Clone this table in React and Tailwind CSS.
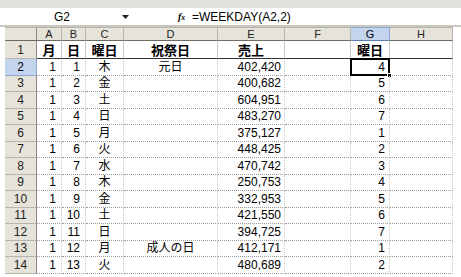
import React from 'react';

const cols = ['A', 'B', 'C', 'D', 'E', 'F', 'G', 'H'];

const rows = [
  ['1', '1', '木', '元日', '402,420', '4'],
  ['1', '2', '金', '', '400,682', '5'],
  ['1', '3', '土', '', '604,951', '6'],
  ['1', '4', '日', '', '483,270', '7'],
  ['1', '5', '月', '', '375,127', '1'],
  ['1', '6', '火', '', '448,425', '2'],
  ['1', '7', '水', '', '470,742', '3'],
  ['1', '8', '木', '', '250,753', '4'],
  ['1', '9', '金', '', '332,953', '5'],
  ['1', '10', '土', '', '421,550', '6'],
  ['1', '11', '日', '', '394,725', '7'],
  ['1', '12', '月', '成人の日', '412,171', '1'],
  ['1', '13', '火', '', '480,689', '2'],
];

const gridCols = 'grid grid-cols-[32px_25px_24px_38px_94px_67px_66px_39px_63px]';
const font = { fontFamily: '"Liberation Sans", "Noto Sans CJK JP", sans-serif' };

// data cell: vertical grid solid, horizontal dotted
const cell = 'border-r border-r-[#c8c8c8] border-b border-dotted border-b-[#9a9a9a] flex items-center text-[12px] text-black leading-none';

const RowHeader = ({ n, active }) => (
  <div
    className={`flex items-center justify-center text-[12px] border-r border-b leading-none ${
      active
        ? 'bg-[#c3d4ee] border-r-[#8fa7cc] border-b-[#8fa7cc] text-black'
        : 'bg-[#e6e4da] border-r-[#8c8a80] border-b-[#b8b6ac] text-[#222]'
    }`}
  >
    {n}
  </div>
);

export default function App() {
  return (
    <div className="w-[461px] h-[277px] bg-white overflow-hidden" style={font}>
      {/* name box / formula bar */}
      <div className="h-[8px] bg-[#e4e2dc]" />
      <div className="h-[17px] flex items-center bg-white ml-[5px] text-[12px] text-black">
        <div className="w-[110px] text-center pl-[4px] leading-none">G2</div>
        <div className="w-[20px] flex justify-center">
          <svg width="7" height="4" viewBox="0 0 7 4">
            <path d="M0 0h7L3.5 4z" fill="#222" />
          </svg>
        </div>
        <div className="w-[43px]" />
        <div className="w-[14px] italic font-bold text-[10px] leading-none" style={{ fontFamily: '"Liberation Serif", serif' }}>
          f<span className="text-[8px]">x</span>
        </div>
        <div className="leading-none">=WEEKDAY(A2,2)</div>
      </div>
      <div className="h-[2px] bg-[#c9c7bd]" />

      <div className={`${gridCols} ml-[5px] grid-rows-[14px_18px_repeat(13,16.5px)]`}>
        {/* column headers */}
        <div className="bg-[#e6e4da] border-r border-b border-r-[#8c8a80] border-b-[#6e6c64] border-t border-t-[#b8b6ac]" />
        {cols.map((c) => (
          <div
            key={c}
            className={`flex items-center justify-center text-[11px] border-r border-b border-t leading-none ${
              c === 'G'
                ? 'bg-[#c3d4ee] border-r-[#8fa7cc] border-b-[#5f7fb0] border-t-[#8fa7cc] text-black'
                : 'bg-[#e6e4da] border-r-[#b8b6ac] border-b-[#6e6c64] border-t-[#b8b6ac] text-[#222]'
            }`}
          >
            {c}
          </div>
        ))}

        {/* row 1 headings */}
        <RowHeader n="1" />
        {['月', '日', '曜日', '祝祭日', '売上', '', '曜日', ''].map((t, i) => (
          <div
            key={i}
            className="border-r border-r-[#c8c8c8] border-b border-b-[#333] flex items-center justify-center text-[13px] font-bold text-black leading-none"
            style={{ fontFamily: '"Noto Sans CJK JP", sans-serif' }}
          >
            {t}
          </div>
        ))}

        {rows.map((r, i) => {
          const n = i + 2;
          return (
            <React.Fragment key={n}>
              <RowHeader n={n} active={n === 2} />
              <div className={`${cell} justify-end pr-[5px]`}>{r[0]}</div>
              <div className={`${cell} justify-end pr-[5px]`}>{r[1]}</div>
              <div className={`${cell} justify-center`}>{r[2]}</div>
              <div className={`${cell} justify-center`}>{r[3]}</div>
              <div className={`${cell} justify-end pr-[3px]`}>{r[4]}</div>
              <div className={cell} />
              <div className={`${cell} justify-end pr-[4px] relative`}>
                {r[5]}
                {n === 2 && (
                  <>
                    <div className="absolute -left-[1px] -top-[1px] -right-[1px] -bottom-[1px] border-2 border-black" />
                    <div className="absolute -right-[3px] -bottom-[3px] w-[5px] h-[5px] bg-black border border-white" />
                  </>
                )}
              </div>
              <div className={cell} />
            </React.Fragment>
          );
        })}
      </div>
    </div>
  );
}
